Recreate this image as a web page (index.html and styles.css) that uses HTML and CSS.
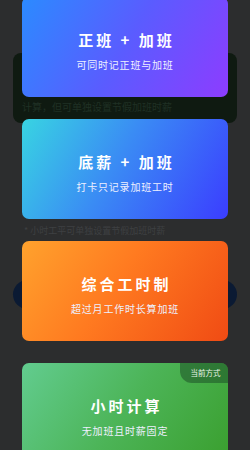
FILE: index.html
```html
<!DOCTYPE html>
<html lang="zh">
<head>
<meta charset="utf-8">
<link rel="stylesheet" href="styles.css">
</head>
<body>
<div class="page">
  <div class="green-card"><p class="green-note">计算，但可单独设置节假加班时薪</p></div>
  <p class="note">* 小时工平可单独设置节假加班时薪</p>
  <div class="pill"></div>
</div>
<div class="overlay">
  <div class="card card-blue">
    <h2 class="title">正班 + 加班</h2>
    <p class="sub">可同时记正班与加班</p>
  </div>
  <div class="card card-cyan">
    <h2 class="title">底薪 + 加班</h2>
    <p class="sub">打卡只记录加班工时</p>
  </div>
  <div class="card card-orange">
    <h2 class="title">综合工时制</h2>
    <p class="sub">超过月工作时长算加班</p>
  </div>
  <div class="card card-green">
    <span class="badge">当前方式</span>
    <h2 class="title">小时计算</h2>
    <p class="sub">无加班且时薪固定</p>
  </div>
</div>
</body>
</html>
```
FILE: styles.css
```css
* { box-sizing: border-box; }
html, body { margin: 0; padding: 0; }
body {
  width: 250px;
  height: 450px;
  overflow: hidden;
  position: relative;
  background: #2c2d2e;
  font-family: "Noto Sans CJK SC", "Noto Sans", sans-serif;
}
.page {
  padding: 53px 13px 0;
  display: flex;
  flex-direction: column;
}
.green-card {
  height: 70px;
  background: #0f1a11;
  border-radius: 8px;
  padding: 47px 9px 0;
}
.green-note {
  margin: 0;
  font-size: 10px;
  line-height: 14px;
  color: #1f3024;
}
.note {
  margin: 101px 0 0 11px;
  font-size: 9px;
  line-height: 14px;
  color: #3e4042;
}
.pill {
  margin-top: 42px;
  height: 29px;
  border-radius: 15px;
  background: #0b1a33;
}
.overlay {
  position: absolute;
  left: 0;
  right: 0;
  top: -3px;
  padding: 0 22px;
  display: flex;
  flex-direction: column;
  gap: 22px;
}
.card {
  position: relative;
  height: 100px;
  border-radius: 7px;
  display: flex;
  flex-direction: column;
  align-items: center;
  padding-top: 33px;
  color: #fff;
  overflow: hidden;
}
.card-blue { background: linear-gradient(120deg, #2b8bff 0%, #5a5cff 50%, #8d3cff 100%); }
.card-cyan { background: linear-gradient(120deg, #38d4e2 0%, #3a8cf4 45%, #3b3dff 100%); }
.card-orange { background: linear-gradient(125deg, #ffa22d 0%, #ff7a20 45%, #f04b14 100%); }
.card-green { background: linear-gradient(125deg, #62cc8f 0%, #4cb457 50%, #3a9f2e 100%); }
.title {
  margin: 0;
  font-size: 15px;
  line-height: 20px;
  font-weight: 700;
  letter-spacing: 3px;
  text-indent: 3px;
  white-space: pre;
}
.sub {
  margin: 8px 0 0;
  font-size: 10px;
  line-height: 14px;
  letter-spacing: 0.8px;
  color: #eef0ff;
}
.badge {
  position: absolute;
  top: 0;
  right: 0;
  width: 48px;
  height: 20px;
  border-bottom-left-radius: 12px;
  background: rgba(30, 80, 40, 0.55);
  color: #e8f4e8;
  font-size: 7.5px;
  line-height: 20px;
  text-align: center;
  padding-left: 3px;
}
```
